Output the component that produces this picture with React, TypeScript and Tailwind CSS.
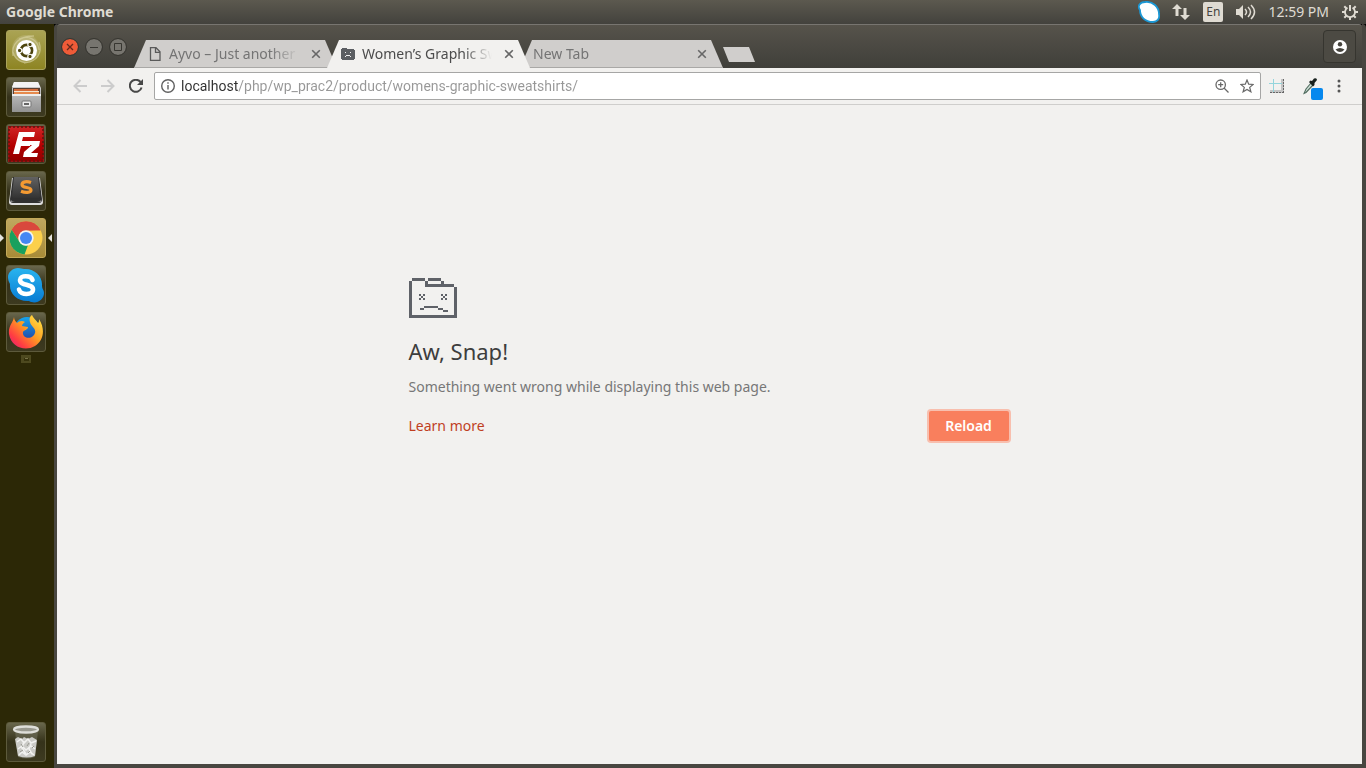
import React from 'react';

function TabShape({ title, active, icon }: { title: string; active?: boolean; icon?: React.ReactNode }) {
  return (
    <div
      className={`relative flex h-7 w-[203px] shrink-0 -mr-[10px] items-center text-[14px] [clip-path:polygon(12px_0,191px_0,100%_100%,0_100%)] ${
        active ? 'z-10 bg-[#f2f1ef] text-[#4c4c4c]' : 'border-b border-[#a9a8a6] bg-[#d0cecc] text-[#747474]'
      } ${icon ? 'pl-[14px]' : 'pl-[13px]'}`}
    >
      {icon && <span className="mr-[7px] w-[14px] shrink-0">{icon}</span>}
      <button className="min-w-0 flex-1 overflow-hidden whitespace-nowrap text-left leading-5 [mask-image:linear-gradient(to_right,black_78%,transparent)]">
        {title}
      </button>
      <button aria-label={`Close ${title}`} className="ml-3 mr-4 size-[10px] shrink-0">
        <svg viewBox="0 0 10 10" className="size-[10px]" stroke="#676767" strokeWidth="1.6">
          <path d="M1.200 1.200l7.600 7.600M8.800 1.200L1.200 8.800" />
        </svg>
      </button>
    </div>
  );
}

function PageIcon() {
  return (
    <svg viewBox="0 0 14 14" className="size-[14px]" fill="none" stroke="#5a5a5a" strokeWidth="1.300">
      <path d="M2.500.700h5.500l4 4v8.600H2.500zM7.500 1v4.300H12" />
    </svg>
  );
}

function SmallSadIcon() {
  return (
    <svg viewBox="0 0 14 12" className="h-3 w-[14px]" shapeRendering="crispEdges">
      <path fill="#5b5e62" d="M1 0h5v1h7v1h1v9h-1v1H1v-1H0V1h1z" />
      <path fill="#eee" d="M4 4h1v1H4zM9 4h1v1H9zM5 7h4v1H5zM4 8h1v1H4zM9 8h1v1H9z" />
    </svg>
  );
}

function SadFolder() {
  return (
    <svg viewBox="0 0 48 40" className="block h-10 w-12" fill="#5f6268" shapeRendering="crispEdges">
      <path d="M3 0h13v3H3zM19 0h13v3H19zM16 3h3v3h26v3H16zM32 3h3v3h-3zM45 9h3v31h-3zM0 3h3v37H0zM3 37h42v3H3z" />
      <path d="M10 16h2v2h-2zM14 16h2v2h-2zM12 18h2v2h-2zM10 20h2v2h-2zM14 20h2v2h-2z" />
      <path d="M32 16h2v2h-2zM36 16h2v2h-2zM34 18h2v2h-2zM32 20h2v2h-2zM36 20h2v2h-2z" />
      <path d="M15 28h14v2H15zM11 30h4v2h-4zM29 30h5v2h-5zM34 32h5v2h-5z" />
    </svg>
  );
}

function LauncherItem({ label, tone, children, running }: { label: string; tone?: string; children: React.ReactNode; running?: boolean }) {
  return (
    <div className="relative flex w-full justify-center">
      {running && (
        <svg viewBox="0 0 52 40" className="absolute inset-0 h-10 w-[52px]" fill="#e4e2dc">
          <path d="M0 16l4 4-4 4zM52 16l-4 4 4 4z" />
        </svg>
      )}
      <button
        aria-label={label}
        className={`flex size-10 items-center justify-center rounded-[3px] border ${
          tone ?? 'border-[#5d5a3c] bg-linear-to-b from-[#69674c] via-[#35321a] to-[#3d3a20]'
        }`}
      >
        {children}
      </button>
    </div>
  );
}

function UbuntuIcon() {
  return (
    <svg viewBox="0 0 38 38" className="size-[38px]">
      <defs>
        <radialGradient id="swirl">
          <stop offset="0" stopColor="#fff" stopOpacity=".55" />
          <stop offset="1" stopColor="#fff" stopOpacity=".12" />
        </radialGradient>
      </defs>
      <circle cx="19" cy="18" r="14" fill="url(#swirl)" />
      <path d="M6 25C4 13 12 5 27 5M12 8c9-4 19 0 20 11M32 11c4 11-2 20-15 21M27 29c-8 5-18 2-21-8" fill="none" stroke="#e4deb0" strokeOpacity=".5" strokeWidth="1.3" />
      <circle cx="19.5" cy="19.5" r="10.5" fill="#fff" />
      <circle cx="19.5" cy="19.5" r="5.6" fill="none" stroke="#4d450f" strokeWidth="2.6" />
      <g stroke="#fff" strokeWidth="1.1" fill="#4d450f">
        <circle cx="12.6" cy="19.5" r="2.2" />
        <circle cx="23" cy="13.5" r="2.2" />
        <circle cx="23" cy="25.5" r="2.2" />
      </g>
    </svg>
  );
}

function FilesIcon() {
  return (
    <svg viewBox="0 0 38 38" className="size-[38px]">
      <defs>
        <linearGradient id="cab" x2="0" y2="1">
          <stop stopColor="#d5d5d5" />
          <stop offset="1" stopColor="#929292" />
        </linearGradient>
      </defs>
      <path d="M7 4h24l3 6v24H5V10z" fill="url(#cab)" />
      <path d="M7 4h24l2 5H5z" fill="#f3f3f3" />
      <path d="M6 10h27v7H6z" fill="#5c4031" />
      <path d="M7 11h24v2H7z" fill="#d46c3b" />
      <path d="M7 13h25v1H7z" fill="#f2e6d2" />
      <path d="M7 14h25v2H7z" fill="#e68a4e" />
      <path d="M5 16h29v2H5z" fill="#eee" />
      <rect x="15" y="23" width="9" height="6" rx="1" fill="#eee" stroke="#777" />
      <path d="M17 25h5v2h-5z" fill="#666" />
    </svg>
  );
}

function FileZillaIcon() {
  return (
    <svg viewBox="0 0 38 38" className="size-[38px]">
      <defs>
        <linearGradient id="fz" x2="0" y2="1">
          <stop stopColor="#cf2424" />
          <stop offset=".55" stopColor="#b40000" />
          <stop offset="1" stopColor="#920000" />
        </linearGradient>
      </defs>
      <rect x="1" y="1" width="36" height="36" fill="#971313" />
      <rect x="2" y="2" width="34" height="34" fill="url(#fz)" stroke="#5d160c" strokeWidth="1.500" strokeDasharray="2 2" />
      <path d="M12 7h16l-1 5H16l-1 4h9l-1 5h-9l-2 8H6z" fill="#fff" />
      <path d="M20 16h13l-1 5-8 7h7l-1 4H16l1-5 8-7h-6z" fill="#fff" />
    </svg>
  );
}

function SublimeIcon() {
  return (
    <svg viewBox="0 0 38 38" className="size-[38px]">
      <defs>
        <linearGradient id="key" x2="0" y2="1">
          <stop stopColor="#626262" />
          <stop offset="1" stopColor="#333" />
        </linearGradient>
      </defs>
      <path d="M5 6h28l3 24q0 3-3 3H5q-3 0-3-3z" fill="#ddd" />
      <path d="M6 5h26l3 22q0 4-3 4H6q-3 0-3-4z" fill="#303030" />
      <path d="M7 5h24l2 19q0 2-3 2H8q-3 0-3-2z" fill="url(#key)" />
      <path d="M4 28q1 2 4 2h22q3 0 4-2v2H4z" fill="#888" />
      <path d="M24 10.500c-4-1.500-9-1-9 2.200 0 3.600 9 2 9 5.300 0 3-6 2.800-10 1.300" fill="none" stroke="#f49a32" strokeWidth="3.200" />
    </svg>
  );
}

function ChromeIcon() {
  return (
    <svg viewBox="0 0 34 34" className="size-[34px]">
      <circle cx="17" cy="17" r="16.500" fill="#fcd04b" />
      <path d="M2.700 8.750A16.500 16.500 0 0 1 31.300 8.750L17 9.500a7.500 7.500 0 0 0-6.500 11.250z" fill="#dc4437" />
      <path d="M17 .5A16.500 16.500 0 0 1 31.500 9.500H17a7.500 7.500 0 0 0-7 5L2.700 8.750A16.500 16.500 0 0 1 17 .5z" fill="#d9483d" />
      <path d="M2.700 8.750L10.500 20.750A7.500 7.500 0 0 0 19 24.200L15.500 33.500A16.500 16.500 0 0 1 2.700 8.750z" fill="#18a05e" />
      <circle cx="17" cy="17" r="7.700" fill="#f3f3f3" />
      <circle cx="17" cy="17" r="6" fill="#4587f4" />
    </svg>
  );
}

function SkypeIcon() {
  return (
    <svg viewBox="0 0 36 36" className="size-9">
      <defs>
        <linearGradient id="sky" x2="0" y2="1">
          <stop stopColor="#29b4ef" />
          <stop offset="1" stopColor="#087bd3" />
        </linearGradient>
      </defs>
      <path d="M10 1c3 0 4 1 6 1 10-1 19 7 18 17 0 3 2 4 2 7 0 7-8 12-15 8C10 35 1 27 2 17 1 15 0 13 0 10 0 5 5 1 10 1z" fill="url(#sky)" />
      <path d="M24.500 13C23 8 12 8 12 13c0 6 13 3.500 13 9.500 0 6-12.500 6-14 0" fill="none" stroke="#fff" strokeWidth="4.600" strokeLinecap="round" />
    </svg>
  );
}

function FirefoxIcon() {
  return (
    <svg viewBox="0 0 36 36" className="size-9">
      <defs>
        <linearGradient id="fox" x1="1" y1="0" x2="0" y2="1">
          <stop stopColor="#fff04a" />
          <stop offset=".45" stopColor="#ff9a22" />
          <stop offset=".75" stopColor="#ff3d42" />
          <stop offset="1" stopColor="#db1882" />
        </linearGradient>
        <linearGradient id="globe" x2="0" y2="1">
          <stop stopColor="#16a5ed" />
          <stop offset="1" stopColor="#253b9c" />
        </linearGradient>
      </defs>
      <circle cx="19" cy="16" r="13" fill="url(#globe)" />
      <path d="M6 3c0 3 2 5 3 6 2-2 5-3 8-1-2 1-3 3-3 4l6 1c0 3-4 3-5 5-1 6 7 8 11 3 4-6-3-8-4-13-1-3 0-6 2-7 1 3 4 5 6 8 1-1 1-2 1-4 7 11 4 22-4 27-10 6-24 1-26-12C0 12 5 9 6 3z" fill="url(#fox)" />
    </svg>
  );
}

function TrashIcon() {
  return (
    <svg viewBox="0 0 38 38" className="size-[38px]">
      <path d="M8 8h23l-3 26q-8 3-17 0z" fill="#777765" fillOpacity=".5" />
      <path d="M8 16l3-2 4 2 2-2 4 2 4-2 5 3-2 16q-8 3-17 0z" fill="#cbcbc7" />
      <path d="M10 19l4-3 3 4 4-4 3 4 5-2M11 26l4-3 4 4 5-4 4 3M12 32l3-3 4 3 4-3 4 3M17 18l-2 7 4 6M24 21l-2 5 3 5" fill="none" stroke="#f2f2f0" strokeWidth="1.500" />
      <path d="M14 21l2 3M20 23l2-3M13 29l3-2M21 30l2-2M25 25l2-2" stroke="#999991" />
      <ellipse cx="19" cy="6.500" rx="12" ry="3" fill="#99998f" stroke="#deded9" strokeWidth="2.300" />
    </svg>
  );
}

function Launcher() {
  return (
    <nav aria-label="Launcher" className="flex w-[54px] shrink-0 flex-col bg-[#2c2806] pb-[6px] pr-[2px] pt-[6px]">
      <div className="flex flex-col gap-[7px]">
        <LauncherItem label="Search" tone="border-[#aaa35b] bg-linear-to-b from-[#aaa353] to-[#8e8522]"><UbuntuIcon /></LauncherItem>
        <LauncherItem label="Files"><FilesIcon /></LauncherItem>
        <LauncherItem label="FileZilla"><FileZillaIcon /></LauncherItem>
        <LauncherItem label="Sublime Text"><SublimeIcon /></LauncherItem>
        <LauncherItem label="Chrome" running tone="border-[#c4aa5a] bg-linear-to-b from-[#bfa75f] to-[#a88c37]"><ChromeIcon /></LauncherItem>
        <LauncherItem label="Skype"><SkypeIcon /></LauncherItem>
        <LauncherItem label="Firefox"><FirefoxIcon /></LauncherItem>
      </div>
      <svg viewBox="0 0 10 8" className="mx-auto mt-[3px] h-2 w-[10px]">
        <path fill="#4d491f" d="M0 0h10v8H0z" />
        <path fill="#35310b" d="M3 3h5v3H3z" />
        <path fill="#777248" d="M4 3h3v1H4z" />
      </svg>
      <div className="mt-auto"><LauncherItem label="Trash"><TrashIcon /></LauncherItem></div>
    </nav>
  );
}

function SystemBar() {
  return (
    <header className="flex h-6 shrink-0 items-center bg-linear-to-b from-[#5c594f] to-[#43423d] pl-[6px] pr-2 text-[#dfdbd2]">
      <h1 className="text-[14px] font-bold leading-5">Google Chrome</h1>
      <div className="ml-auto flex items-center">
        <svg viewBox="0 0 22 22" className="mr-3 size-[22px]">
          <path d="M7 1c8-1 14 5 14 12 1 5-2 8-6 8C7 21 2 16 2 9-1 5 2 1 7 1z" fill="#fff" stroke="#1c98d5" strokeWidth="1.800" />
        </svg>
        <svg viewBox="0 0 18 16" className="mr-[13px] h-4 w-[18px]" fill="#dfdbd2">
          <path d="M5 0l5 5H6.500v7h-3V5H0zM13 16l-5-5h3.500V4h3v7H18z" />
        </svg>
        <span className="mr-[13px] flex size-5 items-center justify-center rounded-[2px] bg-[#dfdbd2] text-[12px] text-[#46443e]">En</span>
        <svg viewBox="0 0 20 16" className="mr-3 h-4 w-5" fill="none" stroke="#dfdbd2" strokeWidth="1.500">
          <path fill="#dfdbd2" stroke="none" d="M0 5h3l4-4v14l-4-4H0z" />
          <path d="M9 5q3 3 0 6M12 3q5 5 0 10M15 1q7 7 0 14" />
        </svg>
        <time className="mr-[13px] text-[14px] leading-5">12:59 PM</time>
        <svg viewBox="0 0 16 16" className="size-4" fill="none" stroke="#dfdbd2">
          <path strokeWidth="1.800" d="M5.500 3.800a5 5 0 1 0 5 0" />
          <path strokeWidth="2" d="M8 1v6M8 13v3M0 8h3M13 8h3M2.300 2.300l2.200 2.200M13.700 2.300l-2.200 2.200M2.300 13.700l2.200-2.200M13.700 13.700l-2.200-2.200" />
        </svg>
      </div>
    </header>
  );
}

function TitleBar() {
  return (
    <div className="flex h-11 shrink-0 items-end rounded-t-[3px] border-t border-[#777570] bg-linear-to-b from-[#56534b] to-[#403f3a] pl-[5px]">
      <div className="mb-[13px] flex gap-2">
        <button aria-label="Close window" className="size-4 rounded-full bg-[#ef5b38] outline outline-[#373631]">
          <svg viewBox="0 0 16 16" stroke="#63291c" strokeWidth="1.300"><path d="M5 5l6 6M11 5l-6 6" /></svg>
        </button>
        <button aria-label="Minimize" className="size-4 rounded-full bg-[#77756f] outline outline-[#373631]">
          <svg viewBox="0 0 16 16" stroke="#373631"><path d="M4 8.500h8" /></svg>
        </button>
        <button aria-label="Maximize" className="size-4 rounded-full bg-[#77756f] outline outline-[#373631]">
          <svg viewBox="0 0 16 16" fill="none" stroke="#373631"><path d="M4.500 4.500h7v7h-7z" /></svg>
        </button>
      </div>
      <div className="ml-2 flex min-w-0">
        <TabShape title="Ayvo – Just another" icon={<PageIcon />} />
        <TabShape title="Women’s Graphic Sw" active icon={<SmallSadIcon />} />
        <TabShape title="New Tab" />
      </div>
      <button aria-label="New tab" className="mb-[6px] ml-[10px] h-[15px] w-8 shrink-0 bg-[#d0cecc] [clip-path:polygon(0_0,26px_0,100%_100%,6px_100%)]" />
      <button aria-label="Profile" className="mb-[5px] ml-auto mr-[6px] flex size-[33px] items-center justify-center rounded-[4px] border border-[#36352f] bg-[#4c4a43]">
        <svg viewBox="0 0 14 14" className="size-[14px]">
          <circle cx="7" cy="7" r="7" fill="#fff" />
          <circle cx="7" cy="4.300" r="2.200" fill="#45433d" />
          <path fill="#45433d" d="M2.500 9.500q4.500-3.200 9 0-4.500 5-9 0z" />
        </svg>
      </button>
    </div>
  );
}

function Toolbar() {
  return (
    <div className="flex h-[37px] shrink-0 items-center border-b border-[#cfcecc] bg-[#f2f1ef] pl-4">
      <div className="mr-[11px] flex items-center gap-[14px]">
        <button aria-label="Back"><svg viewBox="0 0 14 14" className="size-[14px]" fill="none" stroke="#ccc" strokeWidth="2"><path d="M14 7H2M7.500 1L1.500 7l6 6" /></svg></button>
        <button aria-label="Forward"><svg viewBox="0 0 14 14" className="size-[14px]" fill="none" stroke="#ccc" strokeWidth="2"><path d="M0 7h12M6.500 1l6 6-6 6" /></svg></button>
        <button aria-label="Reload page">
          <svg viewBox="0 0 14 14" className="size-[14px]" fill="none" stroke="#484848" strokeWidth="2"><path d="M12.600 8.500A6 6 0 1 1 11.500 3" /><path d="M14 0v6H8z" fill="#484848" stroke="none" /></svg>
        </button>
      </div>
      <div className="flex h-7 min-w-0 flex-1 items-center rounded-[2px] border border-[#a6a6a5] bg-white">
        <svg viewBox="0 0 14 14" className="ml-[6px] mr-[6px] size-[14px] shrink-0" fill="none" stroke="#606060" strokeWidth="1.400">
          <circle cx="7" cy="7" r="6.300" /><path d="M7 6v4.500M7 3.300v1.500" />
        </svg>
        <input
          aria-label="Address"
          defaultValue="localhost/php/wp_prac2/product/womens-graphic-sweatshirts/"
          className="min-w-0 flex-1 bg-[linear-gradient(to_right,#303030_57px,#979797_57px)] bg-clip-text font-[Roboto,sans-serif] text-[14px] leading-5 text-transparent outline-none"
        />
        <button aria-label="Zoom" className="mr-[11px]">
          <svg viewBox="0 0 14 14" className="size-[14px]" fill="none" stroke="#686868" strokeWidth="1.300"><circle cx="5.700" cy="5.700" r="4.700" /><path d="M9 9l4.500 4.500M3.200 5.700h5M5.700 3.200v5" /></svg>
        </button>
        <button aria-label="Bookmark" className="mr-[6px]">
          <svg viewBox="0 0 14 14" className="size-[14px]" fill="none" stroke="#686868" strokeWidth="1.200"><path d="M7 1l1.700 4.200 4.500.3-3.500 2.900 1.200 4.400L7 10.400l-3.900 2.400 1.200-4.400L.8 5.500l4.500-.3z" /></svg>
        </button>
      </div>
      <div className="flex shrink-0 items-center pl-2 pr-[21px]">
        <button aria-label="Page ruler" className="mr-[18px]">
          <svg viewBox="0 0 16 16" className="size-4" fill="none" shapeRendering="crispEdges">
            <path d="M1 13.500h14M13.500 1v13" stroke="#c4c4c4" strokeWidth="3" />
            <path d="M1 14.500h14.500M14.500 1v14" stroke="#666" strokeDasharray="2 1" />
            <path d="M0 5.500h13M4.500 1v13" stroke="#94d5dc" />
          </svg>
        </button>
        <button aria-label="Colour picker" className="mr-[14px]">
          <svg viewBox="0 0 20 22" className="mt-[5px] h-[22px] w-5">
            <path d="M8 5L3 11l-2 4.500L3 14.500 10 7" fill="#cfe0d8" stroke="#4f6b5d" strokeWidth="1.100" />
            <path d="M6 4l1.500-1.500L9 3l2-2.500q3-1 3 1.500L11.500 5v2L10 8.500z" fill="#18201c" />
            <rect x="8" y="10" width="12" height="12" rx="2" fill="#0788ee" />
          </svg>
        </button>
        <button aria-label="Menu"><svg viewBox="0 0 4 14" className="h-[14px] w-1" fill="#555"><circle cx="2" cy="2" r="1.500" /><circle cx="2" cy="7" r="1.500" /><circle cx="2" cy="12" r="1.500" /></svg></button>
      </div>
    </div>
  );
}

export default function App() {
  return (
    <div className="flex min-h-screen flex-col bg-black font-['Noto_Sans',sans-serif]">
      <SystemBar />
      <div className="flex flex-1">
        <Launcher />
        <div className="flex min-w-0 flex-1 flex-col rounded-t-[4px] border-b-4 border-l-[3px] border-r-4 border-[#484640]">
          <TitleBar />
          <Toolbar />
          <main className="flex-1 bg-[#f2f1ef] pt-[173px]">
            <section className="mx-auto w-[602px]">
              <SadFolder />
              <h2 className="mt-[19px] text-[22px] leading-7 text-[#3d3d3d]">Aw, Snap!</h2>
              <p className="mt-3 text-[14px] leading-5 text-[#777]">Something went wrong while displaying this web page.</p>
              <div className="mt-3 flex items-center justify-between">
                <a href="#learn-more" className="text-[14px] leading-5 text-[#c03f1f]">Learn more</a>
                <button className="h-[34px] w-[84px] rounded-[4px] border-2 border-[#f8bfae] bg-[#f97f5d] text-[14px] font-semibold leading-5 text-white">Reload</button>
              </div>
            </section>
          </main>
        </div>
      </div>
    </div>
  );
}
